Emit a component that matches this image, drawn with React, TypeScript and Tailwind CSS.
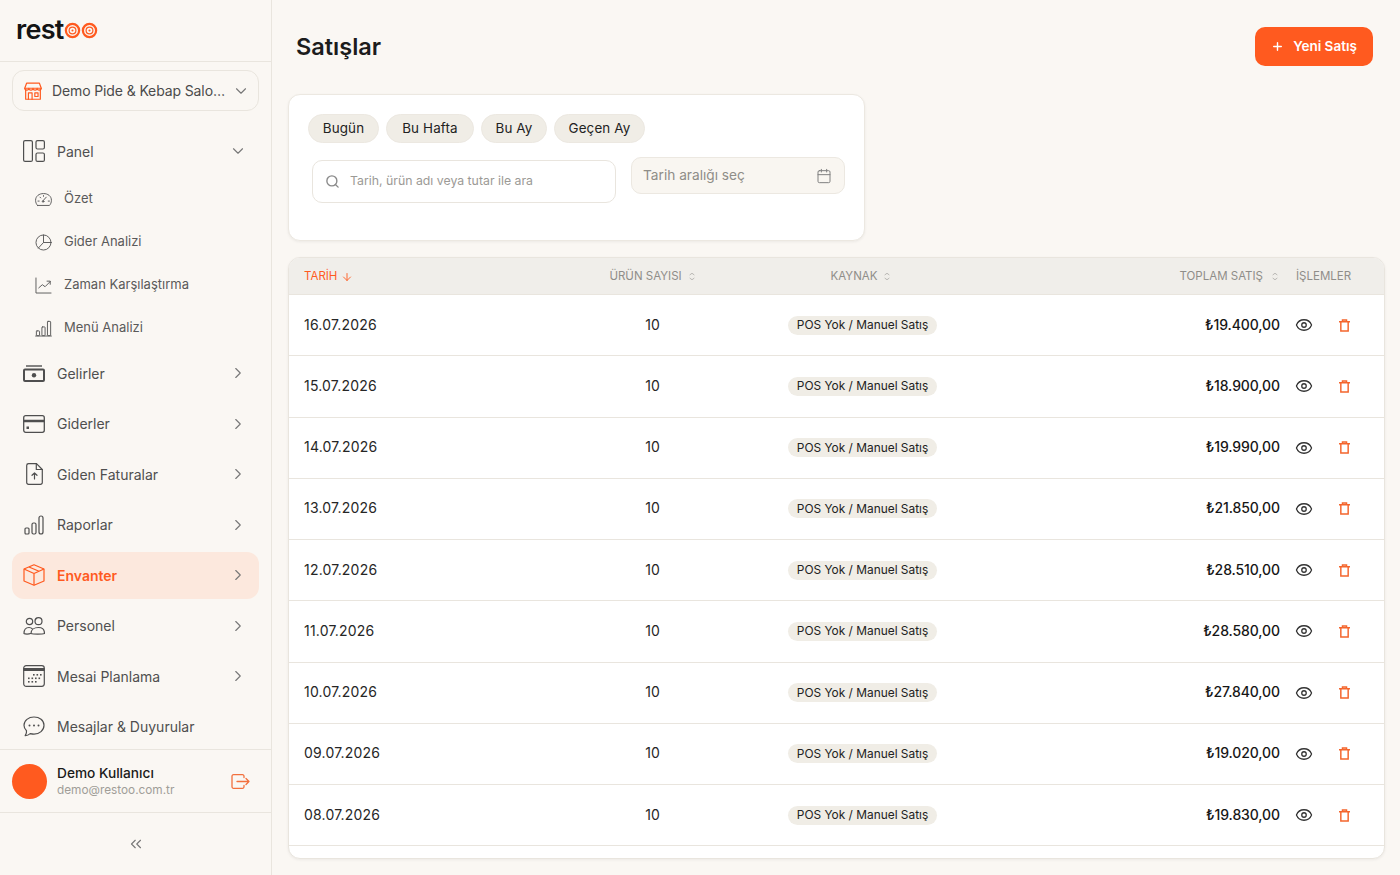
import { ReactNode } from "react"
import { ChevronDown, ChevronRight, ChevronUp, ChevronsLeft, ArrowDown, Plus, Search, Calendar, Eye } from "lucide-react"

const font = "font-['Inter','Liberation_Sans',sans-serif]"

const Svg = ({ className, children, sw = 1.2 }: { className?: string; children: ReactNode; sw?: number }) => (
  <svg viewBox="0 0 24 24" fill="none" stroke="currentColor" strokeWidth={sw} strokeLinecap="round" strokeLinejoin="round" className={className}>
    {children}
  </svg>
)

const Target = () => (
  <svg viewBox="0 0 18 18" className="h-[17px] w-[17px]">
    <circle cx="9" cy="9" r="7" fill="none" stroke="#ff5a1f" strokeWidth="2.4" />
    <circle cx="9" cy="9" r="3.6" fill="none" stroke="#ff5a1f" strokeWidth="1.3" />
    <circle cx="9" cy="9" r="1.1" fill="#ff5a1f" />
  </svg>
)

const StoreIcon = () => (
  <Svg className="h-[22px] w-[22px]" sw={1.3}>
    <path d="M4 10v11h16V10" />
    <path d="M3 9 5 3.500h14L21 9c0 1.300-1.200 2-2.250 2S16.500 10.300 16.500 9c0 1.300-1.200 2-2.250 2S12 10.300 12 9c0 1.300-1.200 2-2.250 2S7.500 10.300 7.500 9c0 1.300-1.200 2-2.250 2S3 10.300 3 9Z" />
    <path d="M3 9h18M7 21v-7h4v7M14 14h3.500v4H14z" />
  </Svg>
)

const PanelIcon = () => (
  <svg viewBox="0 0 22 22" fill="none" stroke="currentColor" strokeWidth="1.200" className="h-[22px] w-[22px]">
    <rect x="0.600" y="0.600" width="8.800" height="20.800" rx="1.500" />
    <rect x="13" y="0.600" width="8.400" height="8.400" rx="1.500" />
    <rect x="13" y="13" width="8.400" height="8.400" rx="1.500" />
  </svg>
)

const GaugeIcon = () => (
  <Svg className="h-[19px] w-[19px]">
    <path d="M4.500 19.500h15c1.500-1.500 2.500-3.800 2.500-6.500C22 7.700 17.500 4.500 12 4.500S2 7.700 2 13c0 2.700 1 5 2.500 6.500Z" />
    <path d="m11 14 4.500-5M5 14h1.500M18 14h1.500M7.500 9l1 1M12 7v1" />
    <circle cx="11.500" cy="14.500" r="1" />
  </Svg>
)

const PieIcon = () => (
  <Svg className="h-[19px] w-[19px]">
    <circle cx="12" cy="12" r="9.500" />
    <path d="M12 2.500V12h9.500M12 12l-6.500 7" />
  </Svg>
)

const LineIcon = () => (
  <Svg className="h-[19px] w-[19px]">
    <path d="M2.500 2.500v19h19" />
    <path d="m6 15 4.500-4 3.500 2.500 6.500-6.500M16.500 6.500h4v4" />
  </Svg>
)

const BarsIcon = ({ className }: { className: string }) => (
  <Svg className={className}>
    <path d="M2 21.500h20" />
    <rect x="3" y="15" width="4" height="6" rx="0.800" />
    <rect x="10" y="10" width="4" height="11" rx="0.800" />
    <rect x="17" y="3" width="4" height="18" rx="0.800" />
  </Svg>
)

const RaporIcon = () => (
  <svg viewBox="0 0 20 20" fill="none" stroke="currentColor" strokeWidth="1.200" className="h-[20px] w-[20px]">
    <rect x="1" y="13" width="4" height="6" rx="1" />
    <rect x="8" y="8" width="4" height="11" rx="1.500" />
    <rect x="15" y="1" width="4" height="18" rx="2" />
  </svg>
)

const CashIcon = () => (
  <svg viewBox="0 0 22 17" className="h-[17px] w-[22px]" fill="none" stroke="currentColor">
    <path d="M3 1h16" strokeWidth="1.400" />
    <rect x="1" y="4.500" width="20" height="11.500" rx="1" strokeWidth="2" />
    <circle cx="11" cy="10.200" r="2.200" fill="currentColor" stroke="none" />
  </svg>
)

const CardIcon = () => (
  <svg viewBox="0 0 22 18" className="h-[18px] w-[22px]" fill="none" stroke="currentColor" strokeWidth="1.300">
    <rect x="0.700" y="0.700" width="20.600" height="16.600" rx="2" />
    <path d="M0.700 5.500h20.600M0.700 6.500h20.600" />
    <rect x="3.500" y="11.500" width="2.500" height="2.500" fill="currentColor" stroke="none" />
  </svg>
)

const FileUpIcon = () => (
  <svg viewBox="0 0 17 22" className="h-[22px] w-[17px]" fill="none" stroke="currentColor" strokeWidth="1.200" strokeLinejoin="round" strokeLinecap="round">
    <path d="M2.500 0.700h8l5.800 5.800v13a1.800 1.800 0 0 1-1.800 1.800h-12a1.800 1.800 0 0 1-1.800-1.800V2.500a1.800 1.800 0 0 1 1.800-1.800Z" />
    <path d="M10.300 0.700v5.800h6M8.500 16v-6M6 12.300 8.500 10l2.500 2.300" />
  </svg>
)

const CubeIcon = () => (
  <svg viewBox="0 0 22 22" className="h-[22px] w-[22px]" fill="none" stroke="currentColor" strokeWidth="1.200" strokeLinejoin="round">
    <path d="M11 0.800 21 5v12L11 21.200 1 17V5Z" />
    <path d="M1 5l10 4.500L21 5M11 9.500v11.700M6 3l10 4.300" />
  </svg>
)

const UsersIcon = () => (
  <svg viewBox="0 0 22 18" className="h-[18px] w-[22px]" fill="none" stroke="currentColor" strokeWidth="1.200" strokeLinecap="round">
    <circle cx="6.500" cy="4.500" r="3.200" />
    <circle cx="15.500" cy="4.200" r="3.500" />
    <path d="M1 16.500c0-3 1.500-6 5-6 1.300 0 2.500.4 3.300 1.300M1 16.500c1 .7 5 .7 6.500 0" />
    <path d="M8 16.500c0-3.500 3-6 7.500-6s6 3 6 6c-2 .8-11.500.8-13.500 0Z" />
  </svg>
)

const CalendarDays = () => (
  <svg viewBox="0 0 22 22" className="h-[22px] w-[22px]" fill="none" stroke="currentColor" strokeWidth="1.200">
    <rect x="0.700" y="0.700" width="20.600" height="20.600" rx="2.500" />
    <path d="M1 3.500h20v2H1z" fill="currentColor" />
    {[[10, 9], [13.500, 9], [17, 9], [5, 12.500], [8.500, 12.500], [12, 12.500], [15.500, 12.500], [5, 16], [8.500, 16], [12, 16]].map(([x, y]) => (
      <rect key={`${x}-${y}`} x={x} y={y} width="1.600" height="1.600" fill="currentColor" stroke="none" />
    ))}
  </svg>
)

const ChatIcon = () => (
  <svg viewBox="0 0 22 21" className="h-[21px] w-[22px]" fill="none" stroke="currentColor" strokeWidth="1.200" strokeLinejoin="round">
    <path d="M11 1C5.500 1 1 4.500 1 9.300c0 2.200.9 4 2.500 5.400.3 1.900-.3 3.500-1.300 5 2-.1 3.800-1 5-2.100 1.200.3 2.500.5 3.800.5 5.500 0 10-3.700 10-8.800S16.500 1 11 1Z" />
    <circle cx="6.500" cy="9.500" r="1" fill="currentColor" stroke="none" />
    <circle cx="11" cy="9.500" r="1" fill="currentColor" stroke="none" />
    <circle cx="15.500" cy="9.500" r="1" fill="currentColor" stroke="none" />
  </svg>
)

const LogoutIcon = () => (
  <svg viewBox="0 0 19 15" className="h-[15px] w-[19px]" fill="none" stroke="currentColor" strokeWidth="1.300" strokeLinecap="round" strokeLinejoin="round">
    <path d="M13 3.500V2.200A1.500 1.500 0 0 0 11.500.700h-9A1.500 1.500 0 0 0 1 2.200v10.600a1.500 1.500 0 0 0 1.500 1.500h9a1.500 1.500 0 0 0 1.500-1.500v-1.300" />
    <path d="M6 7.500h12M15 4.500l3 3-3 3" />
  </svg>
)

const TrashIcon = () => (
  <svg viewBox="0 0 12 14" className="h-[13px] w-[11px]" fill="none" stroke="#f4652d" strokeWidth="1.600">
    <path d="M0 2.800h12M3.800 2.800V1h4.400v1.800" />
    <path d="M2 3v10h8V3" />
  </svg>
)

const mainItems: { label: string; icon: ReactNode; active?: boolean; noArrow?: boolean }[] = [
  { label: "Gelirler", icon: <CashIcon /> },
  { label: "Giderler", icon: <CardIcon /> },
  { label: "Giden Faturalar", icon: <FileUpIcon /> },
  { label: "Raporlar", icon: <RaporIcon /> },
  { label: "Envanter", icon: <CubeIcon />, active: true },
  { label: "Personel", icon: <UsersIcon /> },
  { label: "Mesai Planlama", icon: <CalendarDays /> },
  { label: "Mesajlar & Duyurular", icon: <ChatIcon />, noArrow: true },
]

const subItems = [
  { label: "Özet", icon: <GaugeIcon /> },
  { label: "Gider Analizi", icon: <PieIcon /> },
  { label: "Zaman Karşılaştırma", icon: <LineIcon /> },
  { label: "Menü Analizi", icon: <BarsIcon className="h-[19px] w-[19px]" /> },
]

const rows = [
  ["16.07.2026", "₺19.400,00"],
  ["15.07.2026", "₺18.900,00"],
  ["14.07.2026", "₺19.990,00"],
  ["13.07.2026", "₺21.850,00"],
  ["12.07.2026", "₺28.510,00"],
  ["11.07.2026", "₺28.580,00"],
  ["10.07.2026", "₺27.840,00"],
  ["09.07.2026", "₺19.020,00"],
  ["08.07.2026", "₺19.830,00"],
]

const presets = [
  { label: "Bugün", width: "w-[71px]" },
  { label: "Bu Hafta", width: "w-[88px]" },
  { label: "Bu Ay", width: "w-[66px]" },
  { label: "Geçen Ay", width: "w-[91px]" },
]

const gridCols = "grid grid-cols-[256px_215px_205px_331px_1fr] items-center"

const SortIcon = () => (
  <span className="ml-1.5 flex flex-col text-[#9a9794]">
    <ChevronUp className="-mb-[1px] h-[6px] w-[8px]" strokeWidth={2.200} preserveAspectRatio="none" />
    <ChevronDown className="h-[6px] w-[8px]" strokeWidth={2.200} preserveAspectRatio="none" />
  </span>
)

function Sidebar() {
  return (
    <aside className="flex h-[875px] w-[272px] shrink-0 flex-col border-r border-[#e9e5de]">
      <div className="flex h-[62px] shrink-0 items-center border-b border-[#e9e5de] pb-[3px] pl-4">
        <span className="text-[27px] leading-none font-semibold tracking-[-0.7px] text-[#141414]">rest</span>
        <span className="mt-[3px] flex">
          <Target />
          <Target />
        </span>
      </div>

      <div className="min-h-0 flex-1 overflow-hidden px-3">
        <button className="mt-2 flex h-[41px] w-full items-center rounded-xl border border-[#e9e5de] pr-[8px] pl-[9px] text-[14px] tracking-[-0.120px] text-[#4b4b4b]">
          <span className="text-[#ff5a1f]">
            <StoreIcon />
          </span>
          <span className="ml-[8px] w-[177px] truncate text-left">Demo Pide &amp; Kebap Salonu</span>
          <ChevronDown className="ml-auto h-[18px] w-[18px] text-[#777]" strokeWidth={1.500} />
        </button>

        <nav className="mt-[16.500px] flex flex-col gap-[3.500px] text-[14px] text-[#4f4f4f]">
          <div className="mb-[-2.500px] flex flex-col">
            <div className="flex h-[47px] items-center pr-[12px] pl-[11px]">
              <PanelIcon />
              <span className="ml-[12px]">Panel</span>
              <ChevronDown className="ml-auto h-[18px] w-[18px] text-[#777]" strokeWidth={1.500} />
            </div>
            <div className="mt-[3px] mb-[-1px] flex flex-col text-[13px]">
              {subItems.map((s) => (
                <div key={s.label} className="flex h-[43px] items-center pl-[22px] text-[#5a5a5a]">
                  {s.icon}
                  <span className="ml-[11px]">{s.label}</span>
                </div>
              ))}
            </div>
          </div>
          {mainItems.map((m) => (
            <div
              key={m.label}
              className={`flex h-[47px] shrink-0 items-center rounded-xl pr-[12px] ${m.active ? "bg-[#fce8dd] font-semibold text-[#ff5a1f]" : ""}`}
            >
              <span className="flex w-[45px] shrink-0 justify-center pr-[1px]">{m.icon}</span>
              <span className="whitespace-nowrap">{m.label}</span>
              {!m.noArrow && <ChevronRight className="ml-auto h-[18px] w-[18px] text-[#777]" strokeWidth={1.500} />}
            </div>
          ))}
        </nav>
      </div>

      <div className="flex h-[64px] shrink-0 items-center border-y border-[#e9e5de] px-3">
        <span className="h-[35px] w-[35px] rounded-full bg-[#ff5a1f]" />
        <div className="ml-[10px] pt-[1px]">
          <div className="text-[13.700px] leading-[17px] font-medium text-[#1a1a1a]">Demo Kullanıcı</div>
          <div className="text-[11.800px] leading-[17px] text-[#a09d98]">demo@restoo.com.tr</div>
        </div>
        <span className="mr-[9px] ml-auto text-[#f2703d]">
          <LogoutIcon />
        </span>
      </div>
      <div className="flex h-[62px] shrink-0 items-center justify-center">
        <ChevronsLeft className="h-[18px] w-[18px] text-[#777]" strokeWidth={1.500} />
      </div>
    </aside>
  )
}

function Filters() {
  return (
    <section className="ml-4 h-[147px] w-[577px] rounded-xl border border-[#ece8e1] bg-white pt-[19px] pl-[19px] shadow-[0_1px_3px_rgba(0,0,0,0.06)]">
      <div className="flex gap-[7px]">
        {presets.map((p) => (
          <span key={p.label} className={`flex h-[29px] items-center justify-center rounded-full border border-[#ece8e1] bg-[#f0ede6] text-[13.400px] tracking-[0.150px] text-[#222] ${p.width}`}>
            {p.label}
          </span>
        ))}
      </div>
      <div className="mt-[14px] flex items-start">
        <div className="mt-[3px] ml-[4px] flex h-[43px] w-[304px] items-center rounded-[10px] border border-[#e9e5de] pl-[12px]">
          <Search className="h-[15px] w-[15px] text-[#8a8a8a]" strokeWidth={2.200} />
          <span className="ml-[10px] text-[12.300px] text-[#9c9a96]">Tarih, ürün adı veya tutar ile ara</span>
        </div>
        <div className="ml-[15px] flex h-[37px] w-[214px] items-center justify-between rounded-[10px] border border-[#ece8e1] bg-[#f9f6f1] pr-[12px] pl-[11px]">
          <span className="text-[13.700px] text-[#8f8d88]">Tarih aralığı seç</span>
          <Calendar className="h-[16px] w-[16px] text-[#808080]" strokeWidth={1.500} />
        </div>
      </div>
    </section>
  )
}

function SalesTable() {
  return (
    <section className="mt-4 mr-[15px] ml-4 flex h-[602px] flex-col overflow-hidden rounded-xl border border-[#e9e5de] bg-white shadow-[0_1px_3px_rgba(0,0,0,0.06)]">
      <div className={`${gridCols} h-[37px] shrink-0 border-b border-[#e9e5de] bg-[#f0eeea] pt-[1px] text-[11.500px] text-[#8f8d89]`}>
        <div className="flex items-center pl-[15px] text-[#ff5a1f]">
          TARİH
          <ArrowDown className="ml-1 h-[12px] w-[12px]" strokeWidth={1.800} />
        </div>
        <div className="flex items-center justify-center">
          ÜRÜN SAYISI
          <SortIcon />
        </div>
        <div className="flex items-center justify-center pr-[3px]">
          KAYNAK
          <SortIcon />
        </div>
        <div className="flex items-center justify-end pr-[1px]">
          TOPLAM SATIŞ
          <span className="w-[2px]" />
          <SortIcon />
          <span className="w-[16px]" />
        </div>
        <div>İŞLEMLER</div>
      </div>
      {rows.map(([date, total]) => (
        <div key={date} className={`${gridCols} h-[61.250px] shrink-0 border-b border-[#e9e5de] text-[14px] text-[#262626]`}>
          <div className="pb-[2px] pl-[15px] tracking-[0.2px]">{date}</div>
          <div className="pb-[2px] text-center">10</div>
          <div className="flex justify-center">
            <span className="flex h-[19px] items-center rounded-full bg-[#f0ede6] px-[9px] text-[11.900px] text-[#222]">POS Yok / Manuel Satış</span>
          </div>
          <div className="pr-[16px] pb-[2px] text-right font-medium tracking-[-0.1px] text-[#161616]">{total}</div>
          <div className="flex items-center">
            <Eye className="-ml-[1px] h-[18px] w-[18px] text-[#333]" strokeWidth={1.700} />
            <span className="ml-[26px] flex w-[11px] justify-center">
              <TrashIcon />
            </span>
          </div>
        </div>
      ))}
    </section>
  )
}

export default function App() {
  return (
    <div className={`${font} flex h-[875px] w-[1400px] overflow-hidden bg-[#faf7f3]`}>
      <Sidebar />
      <main className="min-w-0 flex-1">
        <header className="flex h-[94px] items-start justify-between pt-[27px] pr-[27px] pl-6">
          <h1 className="mt-[4px] text-[23.500px] leading-[32px] font-semibold text-[#1c1c1c]">Satışlar</h1>
          <button className="flex h-[39px] w-[118px] items-center justify-center rounded-[10px] bg-[#ff5a1f] text-[13.500px] font-semibold text-white">
            <Plus className="mr-[9px] h-[13px] w-[13px]" strokeWidth={2.600} />
            Yeni Satış
          </button>
        </header>
        <Filters />
        <SalesTable />
      </main>
    </div>
  )
}
